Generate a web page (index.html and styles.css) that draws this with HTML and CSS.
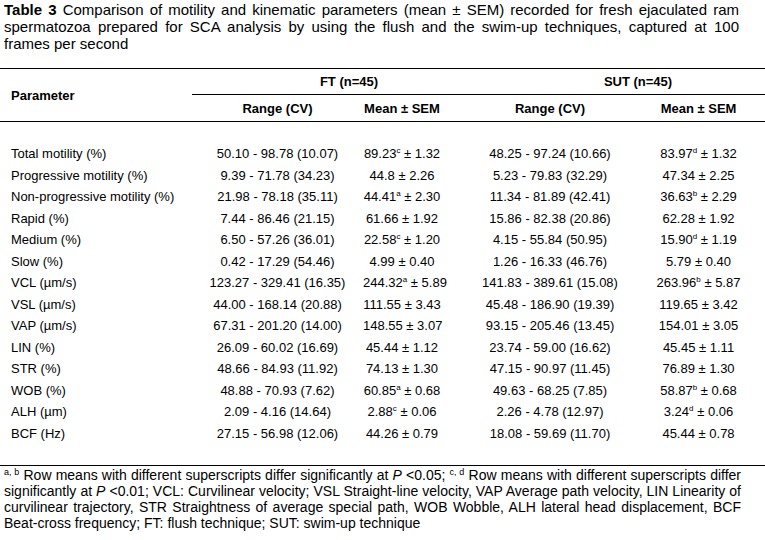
FILE: index.html
```html
<!DOCTYPE html>
<html lang="en">
<head>
<meta charset="utf-8">
<title>Table 3</title>
<link rel="stylesheet" href="styles.css">
</head>
<body>
<div class="caption">
  <span class="ln"><b>Table 3</b> Comparison of motility and kinematic parameters (mean ± SEM) recorded for fresh ejaculated ram</span>
  <span class="ln">spermatozoa prepared for SCA analysis by using the flush and the swim-up techniques, captured at 100</span>
  <span class="ln last">frames per second</span>
</div>
<table class="data">
  <colgroup>
    <col class="c1"><col class="c2"><col class="c3"><col class="c4"><col class="c5">
  </colgroup>
  <thead>
    <tr class="h1">
      <th rowspan="2" class="param-h">Parameter</th>
      <th colspan="2" class="grp ft">FT (n=45)</th>
      <th colspan="2" class="grp sut">SUT (n=45)</th>
    </tr>
    <tr class="h2">
      <th class="rng">Range (CV)</th>
      <th class="mft">Mean ± SEM</th>
      <th class="rng">Range (CV)</th>
      <th class="msut">Mean ± SEM</th>
    </tr>
  </thead>
  <tbody>
    <tr class="spacer"><td colspan="5"></td></tr>
    <tr><td class="p">Total motility (%)</td><td class="rng">50.10 - 98.78 (10.07)</td><td class="mft">89.23<sup>c</sup> ± 1.32</td><td class="rng">48.25 - 97.24 (10.66)</td><td class="msut">83.97<sup>d</sup> ± 1.32</td></tr>
    <tr><td class="p">Progressive motility (%)</td><td class="rng">9.39 - 71.78 (34.23)</td><td class="mft">44.8 ± 2.26</td><td class="rng">5.23 - 79.83 (32.29)</td><td class="msut">47.34 ± 2.25</td></tr>
    <tr><td class="p">Non-progressive motility (%)</td><td class="rng">21.98 - 78.18 (35.11)</td><td class="mft">44.41<sup>a</sup> ± 2.30</td><td class="rng">11.34 - 81.89 (42.41)</td><td class="msut">36.63<sup>b</sup> ± 2.29</td></tr>
    <tr><td class="p">Rapid (%)</td><td class="rng">7.44 - 86.46 (21.15)</td><td class="mft">61.66 ± 1.92</td><td class="rng">15.86 - 82.38 (20.86)</td><td class="msut">62.28 ± 1.92</td></tr>
    <tr><td class="p">Medium (%)</td><td class="rng">6.50 - 57.26 (36.01)</td><td class="mft">22.58<sup>c</sup> ± 1.20</td><td class="rng">4.15 - 55.84 (50.95)</td><td class="msut">15.90<sup>d</sup> ± 1.19</td></tr>
    <tr><td class="p">Slow (%)</td><td class="rng">0.42 - 17.29 (54.46)</td><td class="mft">4.99 ± 0.40</td><td class="rng">1.26 - 16.33 (46.76)</td><td class="msut">5.79 ± 0.40</td></tr>
    <tr><td class="p">VCL (µm/s)</td><td class="rng">123.27 - 329.41 (16.35)</td><td class="mft">244.32<sup>a</sup> ± 5.89</td><td class="rng">141.83 - 389.61 (15.08)</td><td class="msut">263.96<sup>b</sup> ± 5.87</td></tr>
    <tr><td class="p">VSL (µm/s)</td><td class="rng">44.00 - 168.14 (20.88)</td><td class="mft">111.55 ± 3.43</td><td class="rng">45.48 - 186.90 (19.39)</td><td class="msut">119.65 ± 3.42</td></tr>
    <tr><td class="p">VAP (µm/s)</td><td class="rng">67.31 - 201.20 (14.00)</td><td class="mft">148.55 ± 3.07</td><td class="rng">93.15 - 205.46 (13.45)</td><td class="msut">154.01 ± 3.05</td></tr>
    <tr><td class="p">LIN (%)</td><td class="rng">26.09 - 60.02 (16.69)</td><td class="mft">45.44 ± 1.12</td><td class="rng">23.74 - 59.00 (16.62)</td><td class="msut">45.45 ± 1.11</td></tr>
    <tr><td class="p">STR (%)</td><td class="rng">48.66 - 84.93 (11.92)</td><td class="mft">74.13 ± 1.30</td><td class="rng">47.15 - 90.97 (11.45)</td><td class="msut">76.89 ± 1.30</td></tr>
    <tr><td class="p">WOB (%)</td><td class="rng">48.88 - 70.93 (7.62)</td><td class="mft">60.85<sup>a</sup> ± 0.68</td><td class="rng">49.63 - 68.25 (7.85)</td><td class="msut">58.87<sup>b</sup> ± 0.68</td></tr>
    <tr><td class="p">ALH (µm)</td><td class="rng">2.09 - 4.16 (14.64)</td><td class="mft">2.88<sup>c</sup> ± 0.06</td><td class="rng">2.26 - 4.78 (12.97)</td><td class="msut">3.24<sup>d</sup> ± 0.06</td></tr>
    <tr><td class="p">BCF (Hz)</td><td class="rng">27.15 - 56.98 (12.06)</td><td class="mft">44.26 ± 0.79</td><td class="rng">18.08 - 59.69 (11.70)</td><td class="msut">45.44 ± 0.78</td></tr>
    <tr class="spacer"><td colspan="5"></td></tr>
  </tbody>
</table>
<div class="notes">
  <span class="ln"><sup>a, b</sup> Row means with different superscripts differ significantly at <i>P</i> &lt;0.05; <sup>c, d</sup> Row means with different superscripts differ</span>
  <span class="ln">significantly at <i>P</i> &lt;0.01; VCL: Curvilinear velocity; VSL Straight-line velocity, VAP Average path velocity, LIN Linearity of</span>
  <span class="ln">curvilinear trajectory, STR Straightness of average special path, WOB Wobble, ALH lateral head displacement, BCF</span>
  <span class="ln last">Beat-cross frequency; FT: flush technique; SUT: swim-up technique</span>
</div>
</body>
</html>
```
FILE: styles.css
```css
html, body {
  margin: 0;
  padding: 0;
  background: #fff;
  color: #000;
}

body {
  width: 765px;
  height: 540px;
  overflow: hidden;
}

.caption,
.notes {
  font-family: "Liberation Sans", Arial, sans-serif;
}

.ln {
  display: block;
  text-align: justify;
  text-align-last: justify;
}

.ln.last {
  text-align: left;
  text-align-last: left;
}

.caption {
  width: 735px;
  padding: 1px 0 0 4px;
  font-size: 15px;
  line-height: 17px;
}

.data {
  margin-top: 16px;
  width: 765px;
  border-collapse: collapse;
  table-layout: fixed;
  font-family: "Liberation Sans", Arial, sans-serif;
  font-size: 13px;
  border-top: 1.5px solid #000;
  border-bottom: 1.5px solid #000;
}

.c1 { width: 192px; }
.c2 { width: 171px; }
.c3 { width: 105px; }
.c4 { width: 164px; }
.c5 { width: 133px; }

.data th,
.data td {
  padding: 0;
  white-space: nowrap;
}

.data th {
  font-weight: bold;
}

.data thead {
  border-bottom: 1.5px solid #000;
}

.h1 th { height: 25px; }
.h2 th { height: 26px; }

.param-h {
  text-align: left;
  padding-left: 11px !important;
}

.grp {
  text-align: center;
  border-bottom: 1.5px solid #000;
}

.ft { padding-left: 38px !important; }
.sut { padding-left: 43px !important; }

.rng { text-align: center; }

.mft {
  text-align: center;
  padding-right: 27px !important;
}

.msut { text-align: center; }

.data tbody td {
  height: 21.5px;
}

.data tbody tr.spacer td {
  height: 21px;
}

.p {
  text-align: left;
  padding-left: 11px !important;
}

sup {
  font-size: 8px;
  line-height: 0;
  vertical-align: 5px;
}

.notes {
  width: 737px;
  padding: 1px 0 0 4px;
  font-size: 14px;
  line-height: 16px;
}

.notes sup {
  font-size: 9px;
  vertical-align: 5px;
}
```
